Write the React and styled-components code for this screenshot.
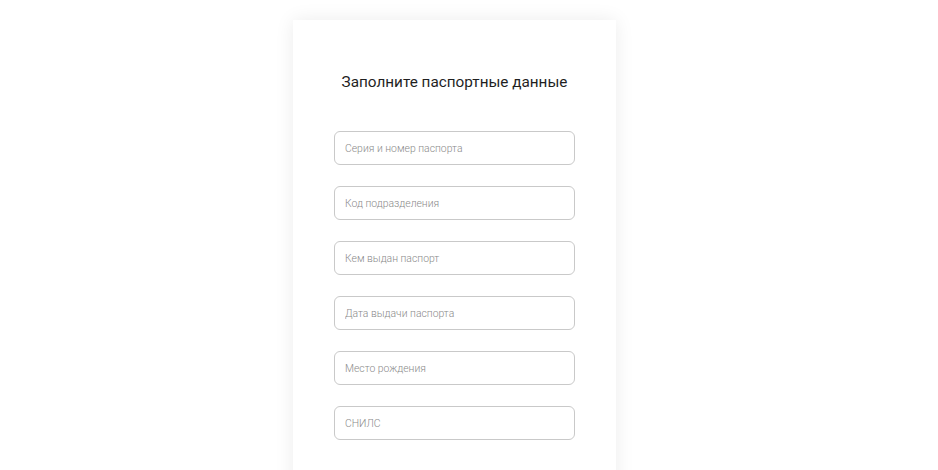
import React from "react";
import styled, { createGlobalStyle } from "styled-components";

const GlobalStyle = createGlobalStyle`
    html, body {
        margin: 0;
        padding: 0;
        background: #ffffff;
        font-family: Roboto, "Liberation Sans", sans-serif;
    }
`

const StyledContainer = styled.div`
    height: 470px;
    overflow: hidden;
    padding: 20px 0 0 293px;
    box-sizing: border-box;
`

const StyledCard = styled.div`
    width: 323px;
    height: 480px;
    background: #ffffff;
    box-shadow: 0 0 18px rgba(0, 0, 0, 0.08);
    padding: 53px 41px 0 41px;
    box-sizing: border-box;
`

const StyledTitle = styled.h1`
    margin: 0 0 39px 0;
    text-align: center;
    color: #1f1f1f;
    font-size: 15.3px;
    line-height: 19px;
    font-weight: 400;
`

const StyledForm = styled.form`
    display: flex;
    flex-direction: column;
    gap: 21px;
`

const StyledInput = styled.input`
    width: 241px;
    height: 34px;
    box-sizing: border-box;
    border: 1px solid #c9c9c9;
    border-radius: 6px;
    padding: 0 10px;
    font-family: Roboto, "Liberation Sans", sans-serif;
    font-size: 10.4px;
    font-weight: 300;
    color: #333;
    outline: none;

    &::placeholder {
        color: #8a8a8a;
    }
`

const fields = [
    "Серия и номер паспорта",
    "Код подразделения",
    "Кем выдан паспорт",
    "Дата выдачи паспорта",
    "Место рождения",
    "СНИЛС",
];

function App() {
    return (
        <StyledContainer>
            <GlobalStyle />
            <StyledCard>
                <StyledTitle>Заполните паспортные данные</StyledTitle>
                <StyledForm>
                    {fields.map(f => (
                        <StyledInput key={f} placeholder={f} />
                    ))}
                </StyledForm>
            </StyledCard>
        </StyledContainer>
    )
};

export default App;
